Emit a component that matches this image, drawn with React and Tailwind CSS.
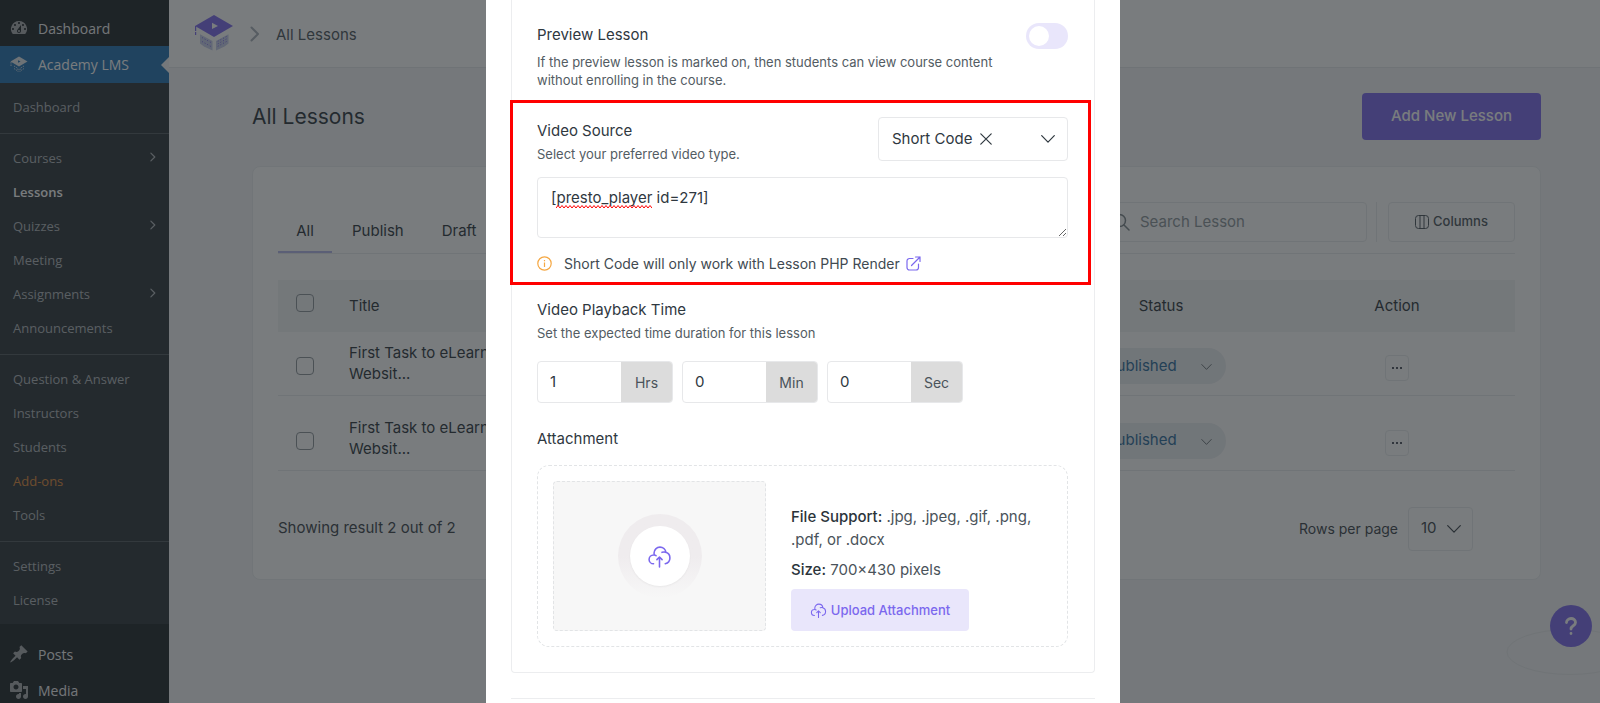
import React from "react";

const submenu = [
  [{ label: "Dashboard" }],
  [
    { label: "Courses", more: true },
    { label: "Lessons", current: true },
    { label: "Quizzes", more: true },
    { label: "Meeting" },
    { label: "Assignments", more: true },
    { label: "Announcements" },
  ],
  [
    { label: "Question & Answer" },
    { label: "Instructors" },
    { label: "Students" },
    { label: "Add-ons", accent: true },
    { label: "Tools" },
  ],
  [{ label: "Settings" }, { label: "License" }],
];

function Chevron({ className }) {
  return (
    <svg viewBox="0 0 14 8" className={className} fill="none" stroke="currentColor" strokeWidth="1.2" strokeLinecap="round" strokeLinejoin="round" aria-hidden="true">
      <path d="M0.7 0.7 7 7.2l6.3-6.5" />
    </svg>
  );
}

function RightChevron({ className }) {
  return (
    <svg viewBox="0 0 10 16" className={className} fill="none" stroke="currentColor" strokeWidth="2" strokeLinecap="round" strokeLinejoin="round" aria-hidden="true">
      <path d="M1.5 1.5 8 8l-6.5 6.5" />
    </svg>
  );
}

function CloudUpload({ className }) {
  return (
    <svg viewBox="0 0 24 24" className={className} fill="none" stroke="currentColor" strokeWidth="1.5" strokeLinecap="round" strokeLinejoin="round" aria-hidden="true">
      <path d="M6.286 19C3.919 19 2 17.104 2 14.765c0-2.34 1.919-4.236 4.286-4.236.284 0 .562.028.83.08m7.265-2.582a5.765 5.765 0 0 1 1.905-.321c.654 0 1.283.109 1.87.309m-11.04 2.594a5.577 5.577 0 0 1-.354-1.962C6.762 5.528 9.32 3 12.476 3c2.94 0 5.361 2.194 5.68 5.015m-11.04 2.594a4.29 4.29 0 0 1 1.55.634m9.49-3.228C20.392 8.78 22 10.881 22 13.353c0 2.707-1.927 4.97-4.5 5.52" />
      <path d="M12 22v-9.5m0 0 2.5 2.5M12 12.5 9.5 15" />
    </svg>
  );
}

function AcademyMark({ className }) {
  return (
    <svg viewBox="0 0 38 36" className={className} aria-hidden="true">
      <path d="M19 0 38 11 19 22 0 11z" fill="#7b68ee" />
      <path d="M0.6 11v10" stroke="#7b68ee" strokeWidth="1.2" strokeDasharray="5 1 3 1" />
      <path d="M17 7.8v6.2l6-3.1z" fill="#fff" />
      <path d="M5 19.3 17.5 26v9.500L9 31.500l-4-3z" fill="#c6ccea" />
      <path d="M33.500 19.300 21 26v9.500l8.500-4 4-3z" fill="#c6ccea" />
      <path d="M7 22.500l9 5M7 26.500l9 5M31.500 21.500l-9 5M31.500 24l-9 5M31.500 26.500l-9 5" stroke="#7b68ee" strokeWidth="1" strokeDasharray="1 2" />
    </svg>
  );
}

function MenuItem({ label, children }) {
  return (
    <a href="#" className="flex h-9 shrink-0 items-center gap-[9px] pl-[9px] text-[14px] text-[#f0f0f1]">
      <svg viewBox="0 0 20 20" className="size-5 fill-[#a7aaad]" aria-hidden="true">{children}</svg>
      {label}
    </a>
  );
}

function Sidebar() {
  return (
    <nav className="flex w-[169px] shrink-0 flex-col bg-[#1d2327] pt-2.5 font-['Open_Sans','Noto_Sans',sans-serif]">
      <MenuItem label="Dashboard">
        <path d="M3.76 16h12.48A7.998 7.998 0 0 0 10 3a7.998 7.998 0 0 0-6.24 13zM10 4c.55 0 1 .45 1 1s-.45 1-1 1-1-.45-1-1 .45-1 1-1zM6 6c.55 0 1 .45 1 1s-.45 1-1 1-1-.45-1-1 .45-1 1-1zm8 0c.55 0 1 .45 1 1s-.45 1-1 1-1-.45-1-1 .45-1 1-1zm-5.37 5.55L12 7v6c0 1.1-.9 2-2 2s-2-.9-2-2c0-.57.24-1.08.63-1.45zM4 10c.55 0 1 .45 1 1s-.45 1-1 1-1-.45-1-1 .45-1 1-1zm12 0c.55 0 1 .45 1 1s-.45 1-1 1-1-.45-1-1 .45-1 1-1zm-5 3c0-.55-.45-1-1-1s-1 .45-1 1 .45 1 1 1 1-.45 1-1z" />
      </MenuItem>
      <a href="#" className="relative flex h-[37px] shrink-0 items-center gap-[9px] bg-[#2271b1] pl-[9px] text-[14px] text-white">
        <svg viewBox="0 0 20 20" className="size-5" aria-hidden="true">
          <path d="M10 1.5 18.5 6.5 10 11.5 1.5 6.5z" fill="#e3e8ec" />
          <path d="M9 5.2v2.6l2.6-1.3z" fill="#2271b1" />
          <path d="M2 7v4M5 11l4 2.5V17M15 11l-4 2.5V17M5 13.5l3 2M15 13.5l-3 2" fill="none" stroke="#c3d3e2" strokeWidth="1" strokeDasharray="1.5 1" />
        </svg>
        Academy LMS
        <span className="absolute top-1/2 right-0 -translate-y-1/2 border-y-8 border-r-8 border-y-transparent border-r-[#f4f5f7]" />
      </a>
      <div className="bg-[#2c3338] pt-2 pb-1.5">
        {submenu.map((group, i) => (
          <ul key={i} className={i > 0 ? "mt-2 border-t border-[#50575c] pt-2" : ""}>
            {group.map((item) => (
              <li key={item.label}>
                <a
                  href="#"
                  className={
                    "flex h-[34px] items-center justify-between px-[13px] text-[13px] " +
                    (item.current ? "font-semibold text-white" : item.accent ? "text-[#e08a3a]" : "text-[#b0b5ba]")
                  }
                >
                  {item.label}
                  {item.more && <RightChevron className="mb-1 h-2.5 w-1.5" />}
                </a>
              </li>
            ))}
          </ul>
        ))}
      </div>
      <div className="pt-3">
        <MenuItem label="Posts">
          <path d="M10.44 3.02l1.82-1.82 6.36 6.35-1.83 1.82c-1.05-.68-2.48-.57-3.41.36l-.75.75c-.92.93-1.04 2.35-.35 3.41l-1.83 1.82-2.41-2.41-2.8 2.79c-.42.42-3.38 2.71-3.8 2.29s1.86-3.39 2.28-3.81l2.79-2.79L4.1 9.36l1.83-1.82c1.05.69 2.48.57 3.4-.36l.75-.75c.93-.92 1.05-2.35.36-3.41z" />
        </MenuItem>
        <MenuItem label="Media">
          <path d="M13 11V4c0-.55-.45-1-1-1h-1.67L9 1H5L3.67 3H2c-.55 0-1 .45-1 1v7c0 .55.45 1 1 1h10c.55 0 1-.45 1-1zM7 4.5c1.38 0 2.5 1.12 2.5 2.5S8.38 9.5 7 9.5 4.5 8.38 4.5 7 5.62 4.5 7 4.5zM14 6h5v10.5c0 1.38-1.12 2.5-2.5 2.5S14 17.88 14 16.5s1.12-2.5 2.5-2.5c.17 0 .34.02.5.05V9h-3V6zm-4 8.05V13h2v3.5c0 1.38-1.12 2.5-2.5 2.5S7 17.88 7 16.5 8.12 14 9.5 14c.17 0 .34.02.5.05z" />
        </MenuItem>
      </div>
    </nav>
  );
}

function Checkbox({ label }) {
  return (
    <input type="checkbox" aria-label={label} className="block size-[18px] appearance-none rounded border border-[#8c9499]" />
  );
}

function LessonRow({ tall }) {
  return (
    <tr className={(tall ? "h-[75px]" : "h-[63px]") + " border-b border-[#e9ebed]"}>
      <td className={"pl-[18px] " + (tall ? "pt-4" : "pt-1.5")}>
        <Checkbox label="Select lesson" />
      </td>
      <td className={tall ? "pt-2.5" : ""}>
        <p className="max-w-[200px] text-[15px] leading-[21px]">First Task to eLearning Websit...</p>
      </td>
      <td className={tall ? "pt-4" : "pt-1.5"}>
        <div className="relative mx-auto w-[130px]">
          <select aria-label="Lesson status" className="block h-9 w-full appearance-none rounded-full bg-[#eceff2] pl-[11px] text-[15px] text-[#2a6a9c]">
            <option>Published</option>
          </select>
          <Chevron className="pointer-events-none absolute top-4 right-3.5 h-1.5 w-[11px] text-[#5c656b]" />
        </div>
      </td>
      <td className={tall ? "pt-5" : "pt-2.5"}>
        <button aria-label="More actions" className="mx-auto flex h-[26px] w-6 items-center justify-center gap-0.5 rounded border border-[#e9ebed]">
          <span className="size-0.5 rounded-full bg-[#111827]" />
          <span className="size-0.5 rounded-full bg-[#111827]" />
          <span className="size-0.5 rounded-full bg-[#111827]" />
        </button>
      </td>
    </tr>
  );
}

function Lessons() {
  return (
    <div className="flex min-w-0 flex-1 flex-col bg-[#f4f5f7] text-[#2b343b]">
      <header className="flex h-[68px] shrink-0 items-center border-b border-[#e6e8ea] bg-white pt-1 pl-[26px]">
        <AcademyMark className="mb-1.5 h-9 w-[38px]" />
        <RightChevron className="mr-4 mb-1 ml-[17px] h-4 w-2.5 text-[#a9b0b8]" />
        <span className="text-[15px] text-[#4a535a]">All Lessons</span>
      </header>
      <main className="pt-[25px] pr-[59px] pl-[83px]">
        <div className="flex items-center justify-between">
          <h1 className="text-[21px]">All Lessons</h1>
          <button className="h-[47px] rounded bg-[#7b68ee] px-[29px] text-[15px] font-medium text-white">Add New Lesson</button>
        </div>
        <section className="mt-[26px] rounded-lg border border-[#eceef0] bg-white px-[25px] pt-[35px] pb-7">
          <div className="flex items-start justify-between border-b border-[#e9ebed]">
            <div className="flex text-[15px]">
              <button className="h-[51px] w-[54px] border-b-2 border-[#b4b6ea] pt-2.5">All</button>
              <button className="ml-5 h-[51px] pt-2">Publish</button>
              <button className="ml-[38px] h-[51px] pt-2">Draft</button>
            </div>
            <div className="flex h-10">
              <label className="flex w-[262px] items-center gap-2.5 rounded border border-[#e9ebed] px-1.5 text-[#7c8489]">
                <svg viewBox="0 0 18 18" className="size-[18px] shrink-0" fill="none" stroke="currentColor" strokeWidth="1.5" strokeLinecap="round" aria-hidden="true">
                  <circle cx="7.5" cy="7.5" r="6" />
                  <path d="m12 12 5 5" />
                </svg>
                <input aria-label="Search lesson" placeholder="Search Lesson" className="w-full text-[15px] outline-none placeholder:text-[#8b9399]" />
              </label>
              <span className="ml-[9px] w-px bg-[#e9ebed]" />
              <button className="ml-[11px] flex w-[127px] items-center justify-center gap-1 rounded border border-[#e9ebed] text-[13px] font-medium text-[#4a535a]">
                <svg viewBox="0 0 14 14" className="size-3.5" fill="none" stroke="currentColor" strokeWidth="1" aria-hidden="true">
                  <rect x="0.5" y="0.5" width="13" height="13" rx="3" />
                  <path d="M5 .5v13M9 .5v13" />
                </svg>
                Columns
              </button>
            </div>
          </div>
          <table className="mt-[26px] w-full table-fixed border-collapse text-left">
            <colgroup>
              <col className="w-[71px]" />
              <col />
              <col className="w-[236px]" />
              <col className="w-[236px]" />
            </colgroup>
            <thead>
              <tr className="h-[52px] bg-[#f3f4f5] text-[15px]">
                <th className="pb-1.5 pl-[18px] font-normal"><Checkbox label="Select all lessons" /></th>
                <th className="font-normal">Title</th>
                <th className="text-center font-normal">Status</th>
                <th className="text-center font-normal">Action</th>
              </tr>
            </thead>
            <tbody>
              <LessonRow />
              <LessonRow tall />
            </tbody>
          </table>
          <div className="mt-9 flex items-center justify-between pr-[42px] text-[15px] text-[#3a434a]">
            <p>Showing result 2 out of 2</p>
            <label className="flex items-center gap-2.5">
              <span className="text-[14px]">Rows per page</span>
              <span className="relative block">
                <select className="block h-11 w-[65px] appearance-none rounded border border-[#e9ebed] pl-3 text-[15px]">
                  <option>10</option>
                </select>
                <Chevron className="pointer-events-none absolute top-[18px] right-3 h-2 w-3.5" />
              </span>
            </label>
          </div>
        </section>
      </main>
    </div>
  );
}

function TimeField({ label, value }) {
  return (
    <label className="flex h-[42px] w-[136px] overflow-hidden rounded border border-[#e7e8ea]">
      <input defaultValue={value} className="w-[83px] pl-3 text-[15px] outline-none" />
      <span className="flex flex-1 items-center justify-center bg-[#dcdcdc] text-[14px] text-[#4a535a]">{label}</span>
    </label>
  );
}

function LessonDialog() {
  return (
    <div role="dialog" aria-label="Lesson" className="h-full w-[634px] bg-white px-[25px] text-[#2f383f]">
      <div className="rounded-b border-x border-b border-[#ecedef] pr-[26px] pb-[25px] pl-[25px]">
        <div className="flex h-[100px] items-start justify-between">
          <div>
            <h2 className="pt-6 text-[15px] leading-[21px]">Preview Lesson</h2>
            <p className="mt-2 max-w-[460px] text-[13px] leading-[18px] text-[#535c63]">
              If the preview lesson is marked on, then students can view course content without enrolling in the course.
            </p>
          </div>
          <input type="checkbox" role="switch" aria-label="Preview Lesson" className="mt-[23px] h-[26px] w-[42px] appearance-none rounded-full bg-[#e9e6fb] before:m-[3px] before:block before:size-5 before:rounded-full before:bg-white" />
        </div>

        <section className="-mr-[23px] -ml-[27px] h-[185px] border-3 border-[#ff0000] pt-3.5 pr-5 pl-6">
          <div className="flex items-start justify-between">
            <div>
              <h2 className="pt-[3px] text-[15px] leading-[21px]">Video Source</h2>
              <p className="mt-1 text-[13px] leading-[18px] text-[#535c63]">Select your preferred video type.</p>
            </div>
            <div className="relative">
              <select aria-label="Video source" className="block h-11 w-[190px] appearance-none rounded border border-[#e7e8ea] bg-white pl-[13px] text-[15px]">
                <option>Short Code</option>
              </select>
              <button aria-label="Clear video source" className="absolute top-4 left-[102px]">
                <svg viewBox="0 0 12 12" className="size-3" fill="none" stroke="currentColor" strokeWidth="1.2" strokeLinecap="round" aria-hidden="true">
                  <path d="m.8.8 10.4 10.4M11.2.8.8 11.2" />
                </svg>
              </button>
              <Chevron className="pointer-events-none absolute top-[18px] right-[13px] h-2 w-3.5" />
            </div>
          </div>
          <div className="relative mt-3.5">
            <textarea aria-label="Short code" defaultValue="[presto_player id=271]" spellCheck="false" className="block h-[61px] w-full rounded border border-[#e7e8ea] px-[13px] py-[9px] text-[15px] leading-[21px] outline-none" />
            <svg viewBox="0 0 96 4" className="absolute top-7 left-[19px] h-1 w-24" fill="none" stroke="#ff0000" aria-hidden="true">
              <path d={"M0 3" + "l2-2.5 2 2.5".repeat(24)} />
            </svg>
          </div>
          <p className="mt-[15px] flex items-center text-[14px] leading-[21px] text-[#414a51]">
            <svg viewBox="0 0 15 15" className="mr-3 size-[15px]" fill="none" stroke="#f5a742" strokeWidth="1.2" aria-hidden="true">
              <circle cx="7.5" cy="7.5" r="6.7" />
              <path d="M7.5 6.5V11M7.5 4v1.3" />
            </svg>
            Short Code will only work with Lesson PHP Render
            <a href="#" aria-label="Open PHP render settings" className="ml-1.5 text-[#7b68ee]">
              <svg viewBox="0 0 15 15" className="size-[15px]" fill="none" stroke="currentColor" strokeWidth="1.2" strokeLinecap="round" strokeLinejoin="round" aria-hidden="true">
                <path d="M7 2.5H3.5A2.5 2.5 0 0 0 1 5v6.5A2.5 2.5 0 0 0 3.5 14H10a2.5 2.5 0 0 0 2.5-2.5V8M5.5 9.5 14 1M9.5 1H14v4.5" />
              </svg>
            </a>
          </p>
        </section>

        <h2 className="mt-3.5 text-[15px] leading-[21px]">Video Playback Time</h2>
        <p className="mt-1 text-[13px] leading-[18px] text-[#535c63]">Set the expected time duration for this lesson</p>
        <div className="mt-[19px] flex gap-[9px]">
          <TimeField label="Hrs" value="1" />
          <TimeField label="Min" value="0" />
          <TimeField label="Sec" value="0" />
        </div>

        <h2 className="mt-[25px] text-[15px] leading-[21px]">Attachment</h2>
        <div className="mt-4 flex items-end gap-[25px] rounded-xl border border-dashed border-[#e2e4e6] p-[15px]">
          <div className="flex h-[150px] w-[213px] shrink-0 items-center justify-center rounded-sm border border-dashed border-[#e2e4e6] bg-[#f7f7f7]">
            <div className="flex size-[84px] items-center justify-center rounded-full bg-linear-to-b from-[#efecee] from-50% to-[#f7f7f7]">
              <div className="flex size-[60px] items-center justify-center rounded-full bg-white text-[#7b68ee] shadow-xs">
                <CloudUpload className="size-[25px]" />
              </div>
            </div>
          </div>
          <div className="text-[15px] leading-[23px] text-[#4a535a]">
            <p>
              <strong className="font-medium text-[#2b343b]">File Support:</strong> .jpg, .jpeg, .gif, .png,
              <br />
              .pdf, or .docx
            </p>
            <p className="mt-[7px]"><strong className="font-medium text-[#2b343b]">Size:</strong> 700×430 pixels</p>
            <button className="mt-2 flex h-[42px] w-[178px] items-center justify-center gap-1 rounded bg-[#e9e6fb] text-[13px] font-medium text-[#7b68ee]">
              <CloudUpload className="size-[17px]" />
              Upload Attachment
            </button>
          </div>
        </div>
      </div>
      <hr className="mt-[25px] border-[#ecedef]" />
    </div>
  );
}

export default function App() {
  return (
    <div className="relative flex h-screen overflow-hidden font-['Inter',sans-serif]">
      <Sidebar />
      <Lessons />
      <svg viewBox="0 0 128 48" className="absolute right-[-34px] bottom-[27px] h-12 w-32" fill="none" stroke="#e9eaec" aria-hidden="true">
        <ellipse cx="64" cy="24" rx="63" ry="22.5" />
      </svg>
      <button aria-label="Help" className="absolute right-2 bottom-14 flex size-[42px] items-center justify-center rounded-full bg-[#7b68ee] text-white">
        <svg viewBox="0 0 12 18" className="h-[18px] w-3" fill="none" stroke="currentColor" strokeWidth="2.8" strokeLinecap="round" aria-hidden="true">
          <path d="M1.5 5.5A4.5 4 0 0 1 6 1.5c2.5 0 4.5 1.6 4.5 4C10.5 9 6 8.5 6 12M6 16.4v.1" />
        </svg>
      </button>
      <div className="fixed inset-0 flex justify-center bg-[#1f2428]/60 pl-1.5">
        <LessonDialog />
      </div>
    </div>
  );
}
